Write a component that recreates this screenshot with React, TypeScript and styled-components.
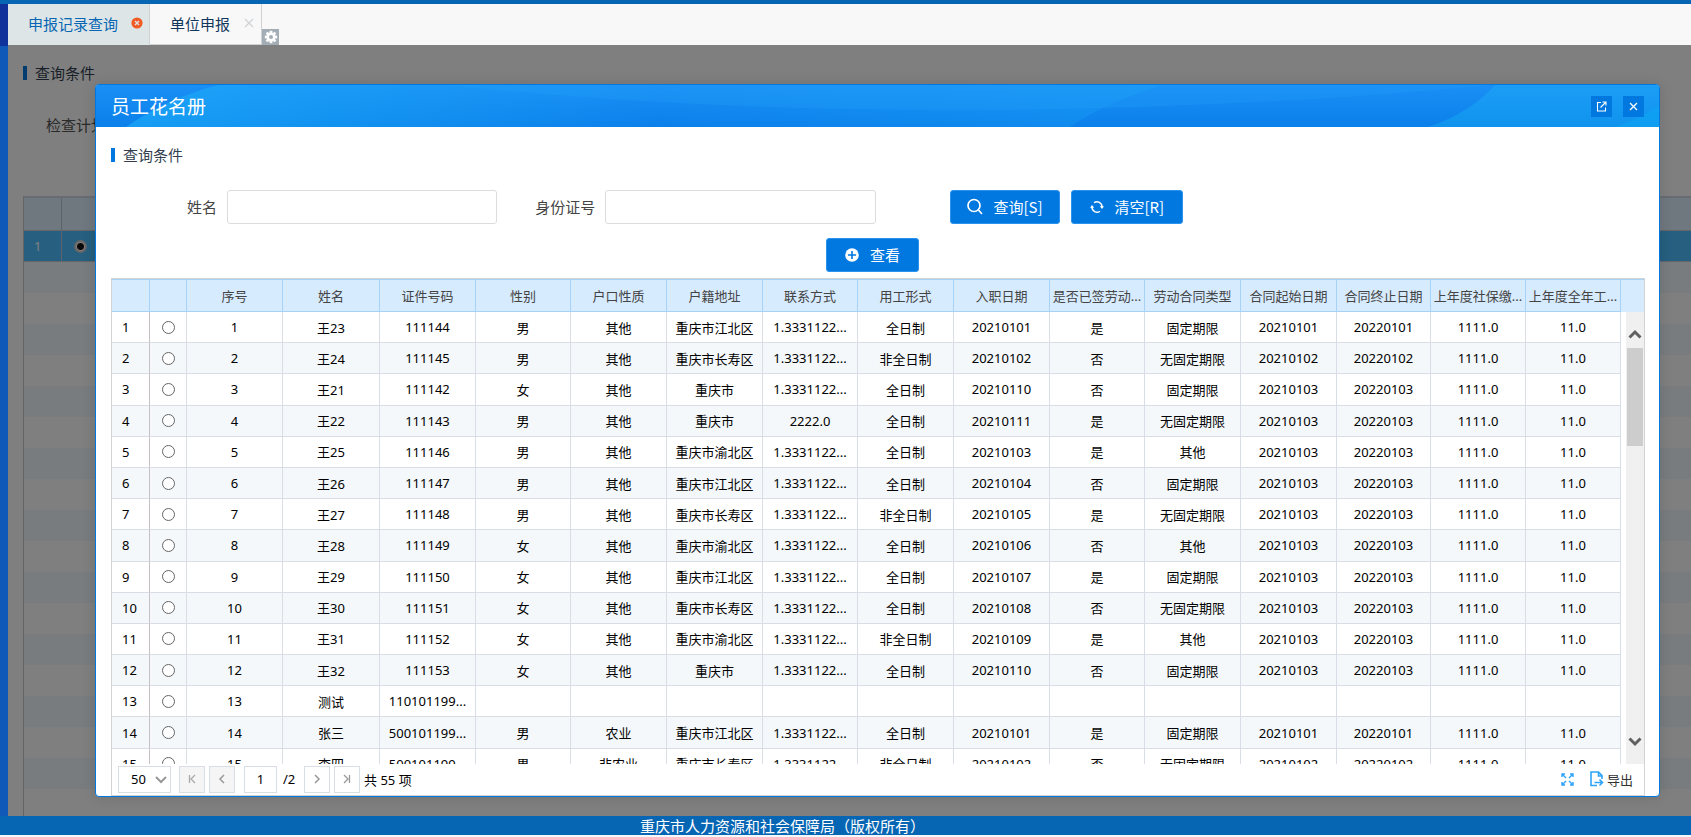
import React from "react";
import styled, { createGlobalStyle, css } from "styled-components";

const FONT = '"Noto Sans", "Noto Sans CJK SC", sans-serif';
const CJK = '"Noto Sans CJK SC", "Noto Sans", sans-serif';

const GlobalStyle = createGlobalStyle`
  *, *::before, *::after { box-sizing: border-box; }
  html, body, #root { height: 100%; margin: 0; }
  body { font-family: ${FONT}; font-size: 13px; color: #000; background: #fff; overflow: hidden; }
  button, input, select { font-family: inherit; font-size: inherit; color: inherit; margin: 0; padding: 0; }
  button { cursor: pointer; border: 0; background: none; }
`;

const Page = styled.div`
  display: flex;
  flex-direction: column;
  height: 100%;
  border-top: 4px solid #0766b3;
  border-bottom: 2px solid #f4f8fb;
`;

const Main = styled.div`
  flex: 1;
  min-height: 0;
  display: flex;
`;

const Rail = styled.div`
  width: 8px;
  flex: none;
  background: #1059b8;
  &::before {
    content: "";
    display: block;
    height: 42px;
    background: #10309a;
  }
`;

const Workspace = styled.div`
  flex: 1;
  min-width: 0;
  display: flex;
  flex-direction: column;
`;

const TabBar = styled.nav`
  height: 41px;
  flex: none;
  display: flex;
  background: #f8f8f8;
`;

const Tab = styled.div<{ $active?: boolean }>`
  display: flex;
  align-items: center;
  gap: 13px;
  padding: 0 6px 2px 20px;
  border-right: 1px solid #cfd2d4;
  border-bottom: 1px solid ${(p) => (p.$active ? "#dde5e7" : "#cfd2d4")};
  background: ${(p) => (p.$active ? "#dde5e7" : "#f8f8f8")};
  font-size: 15px;
`;

const TabLink = styled.a<{ $active?: boolean }>`
  color: ${(p) => (p.$active ? "#0766b3" : "#10365c")};
  font-family: ${CJK};
  text-decoration: none;
  white-space: nowrap;
`;

const TabClose = styled.button`
  width: 12px;
  height: 12px;
  display: flex;
`;

const Gear = styled.button`
  width: 17px;
  height: 16px;
  align-self: flex-end;
  display: flex;
  align-items: center;
  justify-content: center;
  background: #a3adb5;
`;

const Stage = styled.div`
  flex: 1;
  min-height: 0;
  position: relative;
  overflow: hidden;
`;

const Underlay = styled.div`
  height: 100%;
  display: flex;
  flex-direction: column;
  padding: 17px 0 0 15px;
  background: #fff;
`;

const Heading = styled.h2`
  margin: 0;
  height: 22px;
  display: flex;
  align-items: center;
  gap: 8px;
  padding-bottom: 1px;
  font-family: ${CJK};
  font-size: 15px;
  line-height: 20px;
  font-weight: 400;
  color: #333f50;
  &::before {
    content: "";
    width: 4px;
    height: 14px;
    background: #0078e0;
  }
`;

const UnderLabel = styled.div`
  margin: 30px 0 0 23px;
  height: 22px;
  line-height: 22px;
  font-family: ${CJK};
  font-size: 15px;
  color: #555;
`;

const UnderGrid = styled.div`
  flex: 1;
  min-height: 0;
  margin-top: 60px;
  border-top: 2px solid #d0d8e4;
  border-left: 1px solid #c4c8cc;
  overflow: hidden;
`;

const UnderRow = styled.div<{ $kind: "head" | "active" | "odd" | "even" }>`
  display: flex;
  height: ${(p) => (p.$kind === "head" ? 33 : 31)}px;
  background: ${(p) => ({ head: "#dfeeff", active: "#4cbeff", odd: "#f1f8fd", even: "#ffffff" })[p.$kind]};
  color: #fff;
  ${(p) => (p.$kind === "head" || p.$kind === "active") && css`border-bottom: 1px solid #c8ccd2;`}
`;

const UnderCell = styled.div<{ $tick?: boolean }>`
  width: 38px;
  display: flex;
  align-items: center;
  padding-left: ${(p) => (p.$tick ? 0 : 10)}px;
  border-right: 1px solid ${(p) => (p.$tick ? "transparent" : "#b9c7dc")};
`;

const Mask = styled.div`
  position: absolute;
  inset: 0;
  display: flex;
  padding: 39px 31px 19px 87px;
  background: rgba(0, 0, 0, 0.5);
`;

const Modal = styled.section`
  flex: 1;
  min-width: 0;
  display: flex;
  flex-direction: column;
  border: 1px solid #0078e0;
  border-radius: 4px;
  background: #fff;
  overflow: hidden;
  box-shadow: 0 0 14px rgba(0, 0, 0, 0.12);
`;

const ModalHead = styled.header`
  position: relative;
  flex: none;
  height: 42px;
  display: flex;
  align-items: center;
  gap: 11px;
  padding: 0 15px;
  color: #fff;
  background: #1289f0;
`;

const HeadArt = styled.svg`
  position: absolute;
  inset: 0;
  width: 100%;
  height: 100%;
`;

const ModalTitle = styled.h1`
  position: relative;
  flex: 1;
  margin: 0;
  font-family: ${CJK};
  font-size: 19px;
  line-height: 28px;
  font-weight: 400;
`;

const HeadButton = styled.button`
  position: relative;
  width: 21px;
  height: 21px;
  display: flex;
  align-items: center;
  justify-content: center;
  background: #0078e0;
`;

const ModalBody = styled.div`
  flex: 1;
  min-height: 0;
  display: flex;
  flex-direction: column;
  padding: 17px 14px 0 15px;
`;

const SearchForm = styled.form`
  margin: 24px 0 0;
  display: grid;
  grid-template-columns: 116px 270fr 108px 271fr 768fr;
  align-items: center;
`;

const Label = styled.label`
  padding: 0 10px 2px 0;
  text-align: right;
  font-family: ${CJK};
  font-size: 15px;
  color: #444;
`;

const TextBox = styled.input`
  width: 100%;
  min-width: 0;
  height: 34px;
  padding: 0 8px;
  border: 1px solid #dcdcdc;
  border-radius: 3px;
  background: #fff;
`;

const Actions = styled.div`
  display: flex;
  padding-left: 74px;
`;

const Toolbar = styled.div`
  display: flex;
  justify-content: center;
  margin: 14px 0 6px;
`;

const Button = styled.button<{ $compact?: boolean }>`
  height: 34px;
  margin-right: 11px;
  padding: 0 ${(p) => (p.$compact ? 16 : 18)}px 1px;
  display: flex;
  align-items: center;
  gap: ${(p) => (p.$compact ? 10 : 11)}px;
  border: 1px solid #2b93ee;
  border-radius: 3px;
  background: #0078e0;
  color: #fff;
  font-family: ${CJK};
  font-size: 15px;
  white-space: nowrap;
`;

const Grid = styled.div`
  flex: 1;
  min-height: 0;
  display: flex;
  flex-direction: column;
  border: 1px solid #d3d3d3;
`;

const Scroller = styled.div`
  flex: 1;
  min-height: 0;
  display: flex;
  overflow: hidden;
`;

const Table = styled.table`
  flex: 1;
  min-width: 0;
  height: 501px;
  table-layout: fixed;
  border-collapse: separate;
  border-spacing: 0;
`;

const Th = styled.th`
  height: 33px;
  padding: 0;
  overflow: hidden;
  border: solid #a6d2f7;
  border-width: 1px 1px 1px 0;
  background: #d7ebff;
  color: #444;
  font-weight: 400;
  white-space: nowrap;
`;

const Tr = styled.tr`
  &:nth-child(even) { background: #f4f8fb; }
`;

const Td = styled.td<{ $index?: boolean }>`
  padding: 0;
  overflow: hidden;
  border-right: 1px solid ${(p) => (p.$index ? "#c6c0c4" : "#d9dde6")};
  border-bottom: 1px solid #d9dde6;
  text-align: center;
  white-space: nowrap;
  ${(p) => p.$index && css`padding-left: 10px; text-align: left;`}
`;

const Radio = styled.input`
  appearance: none;
  display: block;
  width: 13px;
  height: 13px;
  margin: 0 auto;
  border: 1px solid #666;
  border-radius: 50%;
  background: #fff;
  &:checked { border: 2px solid #ccc; background: radial-gradient(#111 0 3px, #fff 4px); }
`;

const ScrollSide = styled.div`
  width: 23px;
  flex: none;
  display: flex;
  flex-direction: column;
  &::before {
    content: "";
    height: 33px;
    flex: none;
    background: #d7ebff;
    border-top: 1px solid #a6d2f7;
  }
`;

const ScrollBar = styled.div`
  flex: 1;
  margin-left: 5px;
  padding: 16px 1px;
  display: flex;
  flex-direction: column;
  align-items: center;
  background: #f0f0f0;
`;

const Thumb = styled.div`
  width: 100%;
  height: 98px;
  margin: 8px 0 auto;
  background: #cdcdcd;
`;

const Pager = styled.footer`
  flex: none;
  height: 31px;
  display: flex;
  align-items: center;
  padding: 0 11px 1px 6px;
`;

const SizePicker = styled.div`
  position: relative;
  width: 53px;
  margin-right: 8px;
  svg { position: absolute; right: 4px; top: 10px; pointer-events: none; }
`;

const Select = styled.select`
  appearance: none;
  width: 100%;
  height: 27px;
  padding-left: 12px;
  border: 1px solid #d9dde6;
  border-radius: 0;
  background: #fff;
  display: block;
`;

const PageButton = styled.button`
  width: 26px;
  height: 27px;
  margin-right: 4px;
  display: flex;
  align-items: center;
  justify-content: center;
  border: 1px solid #d9dde6;
  background: ${(p) => (p.disabled ? "#f5f5f5" : "#fff")};
`;

const PageInput = styled.input`
  width: 33px;
  height: 27px;
  margin: 0 6px 0 5px;
  border: 1px solid #d9dde6;
  text-align: center;
`;

const PageCount = styled.span`
  width: 21px;
`;

const Total = styled.span`
  flex: 1;
`;

const Tool = styled.button`
  display: flex;
  align-items: center;
  gap: 3px;
  margin-left: 16px;
  color: #333;
`;

const Footer = styled.div`
  flex: none;
  height: 19px;
  padding-right: 126px;
  background: #0766b3;
  color: #fff;
  font-family: ${CJK};
  font-size: 15px;
  line-height: 19px;
  text-align: center;
`;

const widths = [38, 37, 96, 97, 96, 95, 96, 96, 95, 96, 96, 95, 96, 96, 94, 95, 95];

const heads = [
  "序号", "姓名", "证件号码", "性别", "户口性质", "户籍地址", "联系方式", "用工形式", "入职日期",
  "是否已签劳动...", "劳动合同类型", "合同起始日期", "合同终止日期", "上年度社保缴...", "上年度全年工...",
];

const P = "1.3331122...";
const rows: string[][] = [
  ["王23", "111144", "男", "其他", "重庆市江北区", P, "全日制", "20210101", "是", "固定期限", "20210101", "20220101"],
  ["王24", "111145", "男", "其他", "重庆市长寿区", P, "非全日制", "20210102", "否", "无固定期限", "20210102", "20220102"],
  ["王21", "111142", "女", "其他", "重庆市", P, "全日制", "20210110", "否", "固定期限", "20210103", "20220103"],
  ["王22", "111143", "男", "其他", "重庆市", "2222.0", "全日制", "20210111", "是", "无固定期限", "20210103", "20220103"],
  ["王25", "111146", "男", "其他", "重庆市渝北区", P, "全日制", "20210103", "是", "其他", "20210103", "20220103"],
  ["王26", "111147", "男", "其他", "重庆市江北区", P, "全日制", "20210104", "否", "固定期限", "20210103", "20220103"],
  ["王27", "111148", "男", "其他", "重庆市长寿区", P, "非全日制", "20210105", "是", "无固定期限", "20210103", "20220103"],
  ["王28", "111149", "女", "其他", "重庆市渝北区", P, "全日制", "20210106", "否", "其他", "20210103", "20220103"],
  ["王29", "111150", "女", "其他", "重庆市江北区", P, "全日制", "20210107", "是", "固定期限", "20210103", "20220103"],
  ["王30", "111151", "女", "其他", "重庆市长寿区", P, "全日制", "20210108", "否", "无固定期限", "20210103", "20220103"],
  ["王31", "111152", "女", "其他", "重庆市渝北区", P, "非全日制", "20210109", "是", "其他", "20210103", "20220103"],
  ["王32", "111153", "女", "其他", "重庆市", P, "全日制", "20210110", "否", "固定期限", "20210103", "20220103"],
  ["测试", "110101199...", "", "", "", "", "", "", "", "", "", ""],
  ["张三", "500101199...", "男", "农业", "重庆市江北区", P, "全日制", "20210101", "是", "固定期限", "20210101", "20220101"],
  ["李四", "500101199...", "男", "非农业", "重庆市长寿区", P, "非全日制", "20210102", "否", "无固定期限", "20210102", "20220102"],
];

const Chevron = ({ d, w = 8, h = 10, color = "#999", sw = 1.5 }: { d: string; w?: number; h?: number; color?: string; sw?: number }) => (
  <svg width={w} height={h} viewBox={`0 0 ${w} ${h}`} fill="none" stroke={color} strokeWidth={sw} aria-hidden>
    <path d={d} />
  </svg>
);

const GearIcon = () => (
  <svg width="14" height="14" viewBox="-7 -7 14 14" aria-hidden>
    {[0, 45, 90, 135].map((a) => (
      <rect key={a} x="-1.4" y="-6.2" width="2.8" height="12.4" fill="#fff" transform={`rotate(${a})`} />
    ))}
    <circle r="3.3" fill="#a3adb5" stroke="#fff" strokeWidth="2.6" />
  </svg>
);

const HeaderArt = () => (
  <HeadArt viewBox="0 0 1564 42" preserveAspectRatio="none" aria-hidden>
    <defs>
      <linearGradient id="base" x1="0" y1="0" x2="0" y2="1">
        <stop offset="0" stopColor="#1a8ff5" />
        <stop offset="1" stopColor="#0b80ea" />
      </linearGradient>
      <linearGradient id="beam" x1="0" y1="0" x2="1" y2="0">
        <stop offset="0" stopColor="#1db0fa" stopOpacity="0.6" />
        <stop offset="1" stopColor="#1db0fa" stopOpacity="0" />
      </linearGradient>
      <linearGradient id="beamEnd" x1="0" y1="0" x2="1" y2="0">
        <stop offset="0" stopColor="#1db0fa" stopOpacity="0" />
        <stop offset="1" stopColor="#1db0fa" stopOpacity="0.25" />
      </linearGradient>
      <linearGradient id="right" x1="0" y1="0" x2="0" y2="1">
        <stop offset="0" stopColor="#1c9ef7" />
        <stop offset="1" stopColor="#0f93ec" />
      </linearGradient>
    </defs>
    <rect width="1564" height="42" fill="url(#base)" />
    <path d="M30 42Q70 14 122 0H560V42Z" fill="url(#beam)" />
    <path d="M560 0H1066Q1010 18 974 42H560Z" fill="url(#beamEnd)" />
    <path d="M345 0C520 16 660 25 860 25C1060 25 1250 14 1400 0Z" fill="#22a2fb" fillOpacity="0.25" />
    <path d="M1333 42C1364 32 1388 14 1400 0H1564V42Z" fill="url(#right)" />
    <path d="M1520 42Q1545 34 1564 20V42Z" fill="#0ea2f2" fillOpacity="0.7" />
  </HeadArt>
);

export default function App() {
  return (
    <>
      <GlobalStyle />
      <Page>
        <Main>
          <Rail />
          <Workspace>
            <TabBar>
              <Tab $active>
                <TabLink $active href="#records">申报记录查询</TabLink>
                <TabClose aria-label="关闭申报记录查询">
                  <svg width="12" height="12" viewBox="0 0 12 12">
                    <circle cx="6" cy="6" r="5.6" fill="#f15a24" />
                    <path d="M4 4l4 4M8 4l-4 4" stroke="#dde5e7" strokeWidth="1.4" />
                  </svg>
                </TabClose>
              </Tab>
              <Tab>
                <TabLink href="#unit">单位申报</TabLink>
                <TabClose aria-label="关闭单位申报">
                  <Chevron w={12} h={12} d="M2 2l8 8M10 2l-8 8" color="#cfd2d6" sw={1.2} />
                </TabClose>
              </Tab>
              <Gear aria-label="设置"><GearIcon /></Gear>
            </TabBar>
            <Stage>
              <Underlay>
                <Heading>查询条件</Heading>
                <UnderLabel>检查计划</UnderLabel>
                <UnderGrid>
                  <UnderRow $kind="head"><UnderCell /></UnderRow>
                  <UnderRow $kind="active">
                    <UnderCell>1</UnderCell>
                    <UnderCell $tick><Radio type="radio" name="plan" defaultChecked aria-label="计划 1" /></UnderCell>
                  </UnderRow>
                  {Array.from({ length: 18 }, (_, i) => (
                    <UnderRow key={i} $kind={i % 2 === 0 && i < 17 ? "odd" : "even"} />
                  ))}
                </UnderGrid>
              </Underlay>
              <Mask>
                <Modal role="dialog" aria-label="员工花名册">
                  <ModalHead>
                    <HeaderArt />
                    <ModalTitle>员工花名册</ModalTitle>
                    <HeadButton aria-label="最大化">
                      <svg width="11" height="11" viewBox="0 0 11 11" fill="none" stroke="#fff" strokeWidth="1.1">
                        <path d="M5 1.5H1.5v8.500h8V6.500M4.500 6.500l5-5M6.500 1h3.500v3.500" />
                      </svg>
                    </HeadButton>
                    <HeadButton aria-label="关闭">
                      <Chevron w={9} h={9} d="M1 1l7 7M8 1l-7 7" color="#fff" sw={1.3} />
                    </HeadButton>
                  </ModalHead>
                  <ModalBody>
                    <Heading>查询条件</Heading>
                    <SearchForm onSubmit={(e) => e.preventDefault()}>
                      <Label htmlFor="name">姓名</Label>
                      <TextBox id="name" />
                      <Label htmlFor="idno">身份证号</Label>
                      <TextBox id="idno" />
                      <Actions>
                        <Button type="submit" $compact>
                          <svg width="16" height="17" viewBox="0 0 16 17" fill="none" stroke="#fff" strokeWidth="1.7" aria-hidden>
                            <circle cx="7" cy="7.500" r="6" />
                            <path d="M11.500 12l3.500 4" />
                          </svg>
                          查询[S]
                        </Button>
                        <Button type="reset">
                          <svg width="14" height="14" viewBox="0 0 14 14" fill="none" stroke="#fff" strokeWidth="1.4" aria-hidden>
                            <path d="M4 2.800A5 5 0 0 1 12 7M10 11.200A5 5 0 0 1 2 7" />
                            <path d="M9.800 6.300h4.200L12 9zM4.200 7.700H0L2 5z" fill="#fff" stroke="none" />
                          </svg>
                          清空[R]
                        </Button>
                      </Actions>
                    </SearchForm>
                    <Toolbar>
                      <Button type="button">
                        <svg width="14" height="14" viewBox="0 0 14 14" aria-hidden>
                          <circle cx="7" cy="7" r="6.800" fill="#fff" />
                          <path d="M7 3v8M3 7h8" stroke="#0078e0" strokeWidth="1.6" />
                        </svg>
                        查看
                      </Button>
                    </Toolbar>
                    <Grid>
                      <Scroller>
                        <Table>
                          <colgroup>
                            {widths.map((w, i) => <col key={i} width={w} />)}
                          </colgroup>
                          <thead>
                            <tr>
                              <Th /><Th />
                              {heads.map((h) => <Th key={h} scope="col">{h}</Th>)}
                            </tr>
                          </thead>
                          <tbody>
                            {rows.map((r, i) => (
                              <Tr key={i}>
                                <Td $index>{i + 1}</Td>
                                <Td><Radio type="radio" name="staff" aria-label={`选择 ${r[0]}`} /></Td>
                                <Td>{i + 1}</Td>
                                {r.map((c, j) => <Td key={j}>{c}</Td>)}
                                <Td>{r[2] && "1111.0"}</Td>
                                <Td>{r[2] && "11.0"}</Td>
                              </Tr>
                            ))}
                          </tbody>
                        </Table>
                        <ScrollSide>
                          <ScrollBar>
                            <Chevron w={14} h={12} d="M1.500 9.500L7 4l5.500 5.500" color="#606060" sw={3} />
                            <Thumb />
                            <Chevron w={14} h={12} d="M1.500 2.500L7 8l5.500-5.500" color="#606060" sw={3} />
                          </ScrollBar>
                        </ScrollSide>
                      </Scroller>
                      <Pager>
                        <SizePicker>
                          <Select aria-label="每页条数" defaultValue="50">
                            <option>50</option>
                            <option>100</option>
                          </Select>
                          <Chevron w={12} h={8} d="M1 1l5 5 5-5" sw={2} />
                        </SizePicker>
                        <PageButton disabled aria-label="首页"><Chevron d="M1.500 1v8M7 1L3 5l4 4" color="#aaa" sw={1.3} /></PageButton>
                        <PageButton disabled aria-label="上一页"><Chevron d="M6 1L2 5l4 4" /></PageButton>
                        <PageInput aria-label="页码" defaultValue="1" />
                        <PageCount>/2</PageCount>
                        <PageButton aria-label="下一页"><Chevron d="M2 1l4 4-4 4" /></PageButton>
                        <PageButton aria-label="末页"><Chevron d="M6.500 1v8M1 1l4 4-4 4" sw={1.3} /></PageButton>
                        <Total>共 55 项</Total>
                        <Tool aria-label="全屏">
                          <svg width="13" height="13" viewBox="0 0 13 13" fill="none" stroke="#2ea3f8" strokeWidth="1.4" aria-hidden>
                            <path d="M1 4V1h3M1 1l4 4M9 1h3v3M12 1L8 5M1 9v3h3M1 12l4-4M12 9v3H9M12 12L8 8" />
                          </svg>
                        </Tool>
                        <Tool>
                          <svg width="14" height="16" viewBox="0 0 14 16" fill="none" stroke="#2ea3f8" strokeWidth="1.6" aria-hidden>
                            <path d="M7 14.500H1V1h7.500L12 4.500V8M8.500 1v4H12M4.500 11.500H12M9.500 8.500l3 3-3 3" />
                          </svg>
                          导出
                        </Tool>
                      </Pager>
                    </Grid>
                  </ModalBody>
                </Modal>
              </Mask>
            </Stage>
          </Workspace>
        </Main>
        <Footer>重庆市人力资源和社会保障局（版权所有）</Footer>
      </Page>
    </>
  );
}
